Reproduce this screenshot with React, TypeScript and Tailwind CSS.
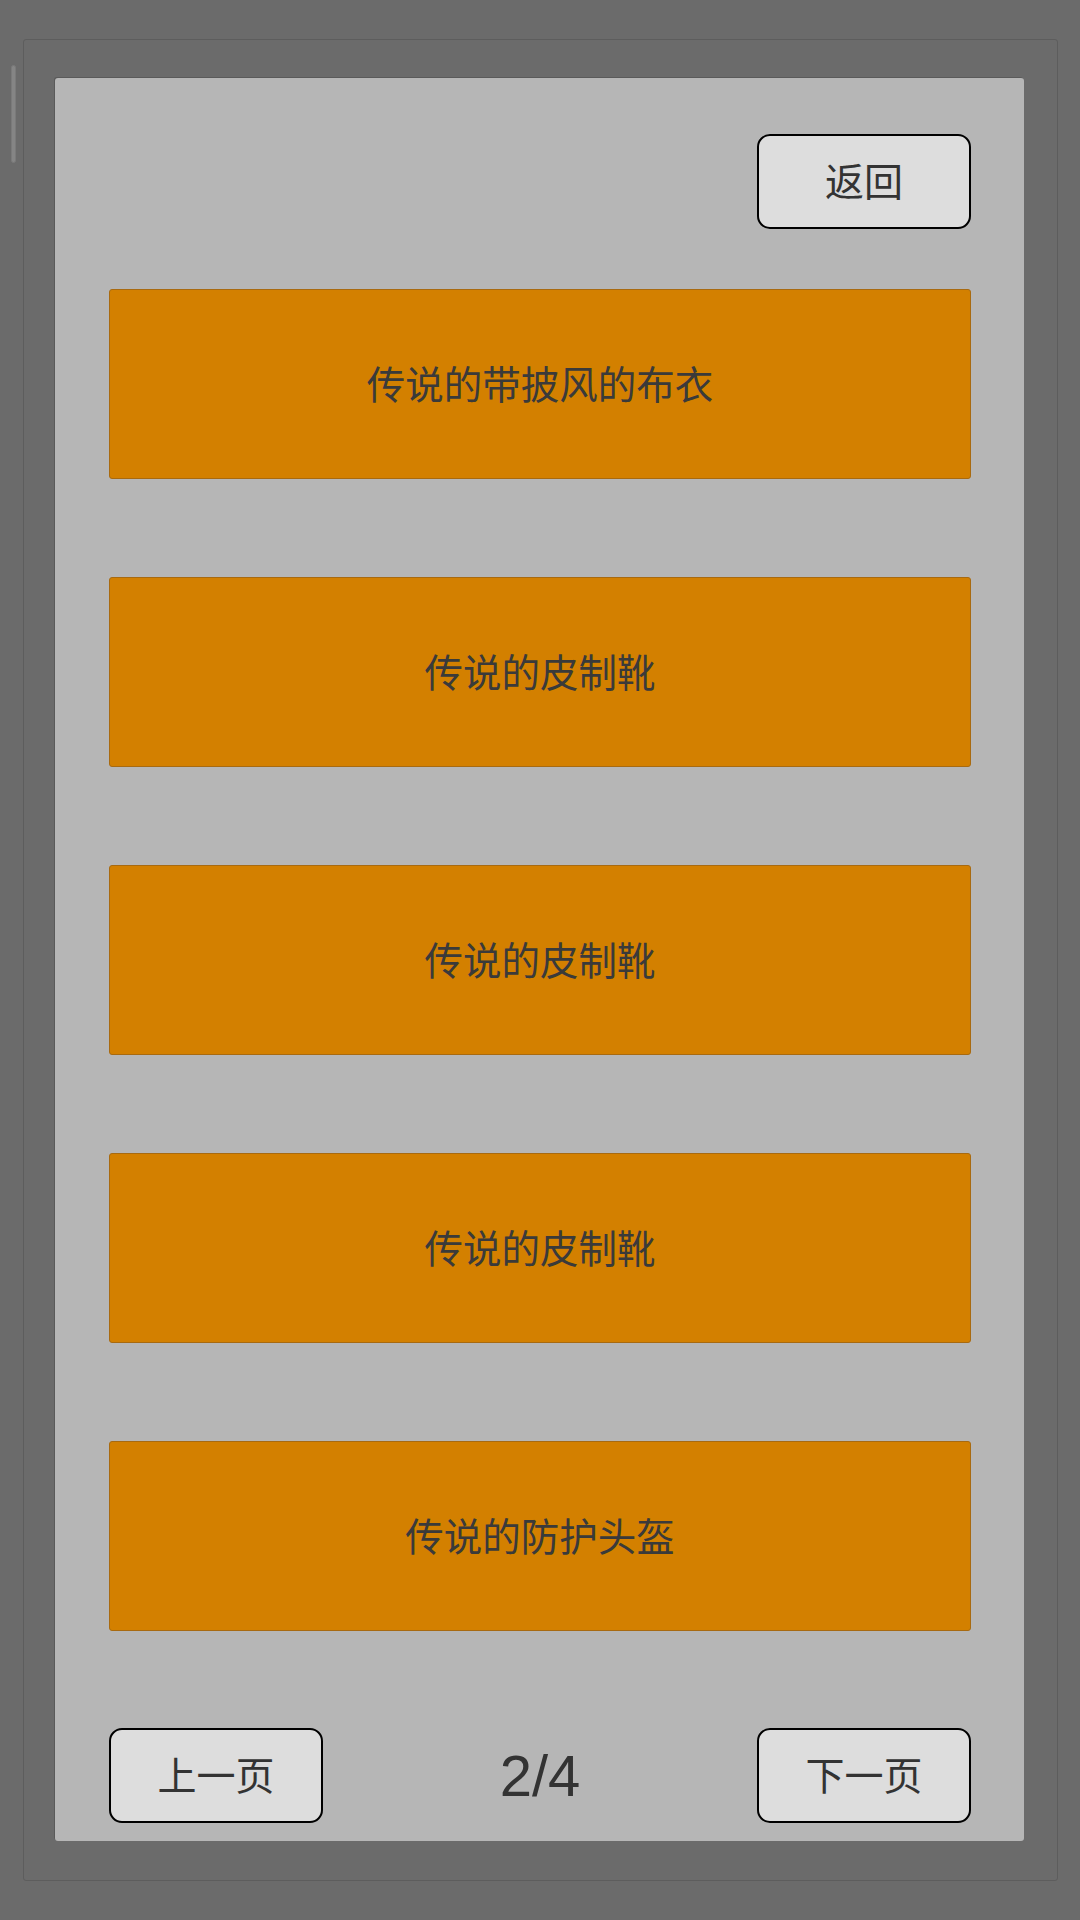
import React from "react";

const cjk = { fontFamily: '"Noto Sans CJK SC", "Noto Sans", sans-serif' };

function GrayButton({ label }: { label: string }) {
  return (
    <div
      className="w-[214px] h-[95px] rounded-[13px] border-2 border-black bg-[#dddddd] flex items-center justify-center pb-[4px] text-[39px] leading-none text-[#333333]"
      style={cjk}
    >
      {label}
    </div>
  );
}

function Item({ label }: { label: string }) {
  return (
    <div
      className="h-[190px] w-full rounded-[3px] border border-[#a86a10] bg-[#d38000] flex items-center justify-center pb-[4px] text-[38.5px] leading-none text-[#3a3a3a]"
      style={cjk}
    >
      {label}
    </div>
  );
}

export default function App() {
  const items = ["传说的带披风的布衣", "传说的皮制靴", "传说的皮制靴", "传说的皮制靴", "传说的防护头盔"];
  return (
    <div className="relative w-[1080px] h-[1920px] bg-[#6b6b6b] pt-[39px] pl-[23px] overflow-hidden">
      <div className="absolute left-[11px] top-[65px] w-[5px] h-[98px] rounded-full bg-[#858585] border border-[#7a7a7a]" />
      <div className="w-[1035px] h-[1842px] border border-[#5d5d5d] rounded-[3px] pt-[38px] pl-[31px]">
        <div className="w-[969px] h-[1763px] bg-[#b6b6b6] rounded-[3px] shadow-[-1px_-1px_0_0_#5a5a5a] flex flex-col pt-[56px] pl-[54px] pr-[53px]">
          <div className="flex justify-end">
            <GrayButton label="返回" />
          </div>
          <div className="mt-[60px] flex flex-col gap-[98px]">
            {items.map((t, i) => (
              <Item key={i} label={t} />
            ))}
          </div>
          <div className="mt-[97px] flex items-center justify-between">
            <GrayButton label="上一页" />
            <div
              className="text-[58px] leading-none text-[#333333]"
              style={{ fontFamily: '"Liberation Sans", Arial, sans-serif' }}
            >
              2/4
            </div>
            <GrayButton label="下一页" />
          </div>
        </div>
      </div>
    </div>
  );
}
